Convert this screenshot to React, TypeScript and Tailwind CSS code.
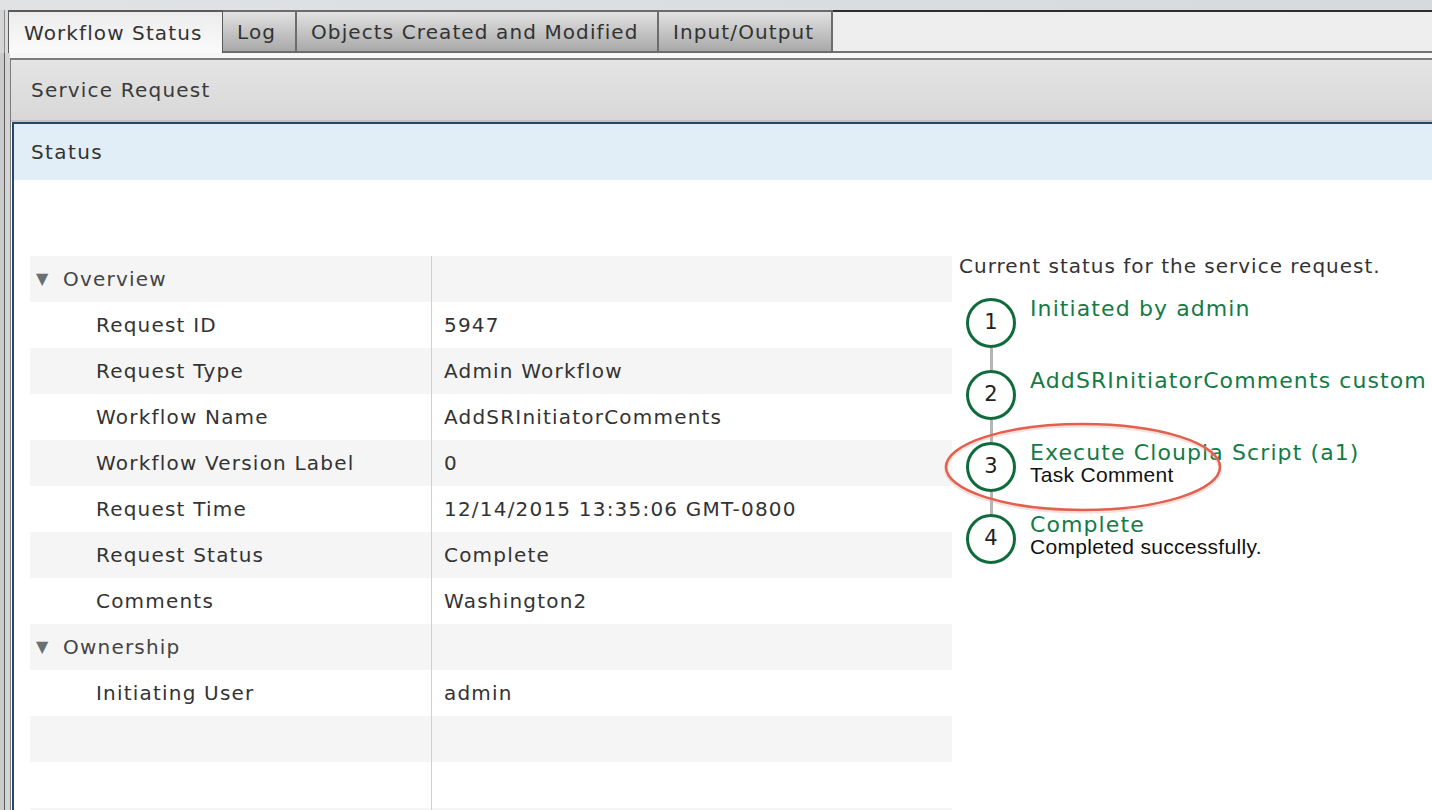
import React from "react";

type Row =
  | { kind: "group"; label: string }
  | { kind: "item"; label: string; value: string }
  | { kind: "blank" };

const rows: Row[] = [
  { kind: "group", label: "Overview" },
  { kind: "item", label: "Request ID", value: "5947" },
  { kind: "item", label: "Request Type", value: "Admin Workflow" },
  { kind: "item", label: "Workflow Name", value: "AddSRInitiatorComments" },
  { kind: "item", label: "Workflow Version Label", value: "0" },
  { kind: "item", label: "Request Time", value: "12/14/2015 13:35:06 GMT-0800" },
  { kind: "item", label: "Request Status", value: "Complete" },
  { kind: "item", label: "Comments", value: "Washington2" },
  { kind: "group", label: "Ownership" },
  { kind: "item", label: "Initiating User", value: "admin" },
  { kind: "blank" },
  { kind: "blank" },
  { kind: "blank" },
];

const steps = [
  { n: 1, title: "Initiated by admin" },
  { n: 2, title: "AddSRInitiatorComments custom" },
  { n: 3, title: "Execute Cloupia Script (a1)", note: "Task Comment" },
  { n: 4, title: "Complete", note: "Completed successfully." },
];

const tabs = [
  { label: "Log", w: "w-[74px]" },
  { label: "Objects Created and Modified", w: "w-[362px]" },
  { label: "Input/Output", w: "w-[174px]" },
];

function Tabs() {
  return (
    <div className="flex h-[43px]">
      <div className="flex w-[8px] shrink-0">
        <div className="w-[4px] bg-[#d4d6d8]" />
        <div className="w-[1px] bg-[#8a8a8a]" />
        <div className="w-[3px] bg-[#dcdcdc]" />
      </div>
      <div className="flex h-full w-[215px] shrink-0 items-center border-x border-t-2 border-[#5a5a5a] bg-linear-to-b from-[#ececec] to-[#fbfbfb] pl-[15px] text-[20px] tracking-[1.1px] text-[#333]">
        Workflow Status
      </div>
      {tabs.map((t) => (
        <div
          key={t.label}
          className={`flex h-full shrink-0 items-center border-r-2 border-t-2 border-b-2 border-[#6c6c6c] bg-linear-to-b from-[#e2e2e2] to-[#a9a9a9] pl-[14px] text-[20px] tracking-[1.1px] text-[#333] ${t.w}`}
        >
          {t.label}
        </div>
      ))}
      <div className="h-full flex-1 border-t-2 border-b-2 border-t-[#2e2e2e] border-b-[#727272] bg-[#eeeeee]" />
    </div>
  );
}

function Table() {
  return (
    <div className="w-[922px] shrink-0">
      {rows.map((r, i) => (
        <div
          key={i}
          className={`flex h-[46px] text-[20px] tracking-[1.2px] text-[#333] ${i % 2 === 0 ? "bg-[#f5f5f5]" : "bg-white"}`}
        >
          <div className="flex w-[401px] shrink-0 items-center">
            {r.kind === "group" && (
              <>
                <span className="ml-[6px] w-[27px] text-[16px] tracking-normal text-[#6a7071]">▼</span>
                <span className="text-[#444]">{r.label}</span>
              </>
            )}
            {r.kind === "item" && <span className="pl-[66px]">{r.label}</span>}
          </div>
          <div className="flex flex-1 items-center border-l border-[#cfcfcf] pl-[12px]">
            {r.kind === "item" ? r.value : ""}
          </div>
        </div>
      ))}
    </div>
  );
}

function Steps() {
  return (
    <div className="relative ml-[7px] mt-[22px]">
      {steps.map((s, i) => (
        <div key={s.n} className="flex h-[72px]">
          <div className="flex w-[50px] shrink-0 flex-col items-center">
            <div className="flex h-[50px] w-[50px] items-center justify-center rounded-full border-[3px] border-[#0f6b3c] text-[21px] text-[#222]">
              {s.n}
            </div>
            {i < steps.length - 1 && <div className="h-[22px] w-[3px] bg-[#b5b5b5]" />}
          </div>
          <div className="ml-[14px] flex flex-col whitespace-nowrap">
            <span className="text-[22px] leading-[22px] tracking-[1.1px] text-[#157a45]">{s.title}</span>
            {s.note && (
              <span className="font-['Liberation_Sans',sans-serif] text-[21px] leading-[21px] tracking-[0.3px] text-[#111]">
                {s.note}
              </span>
            )}
          </div>
        </div>
      ))}
      <svg
        className="pointer-events-none absolute left-[-25px] top-[122px]"
        width="284"
        height="96"
        viewBox="0 0 284 96"
      >
        <ellipse cx="142" cy="48.5" rx="137" ry="43" fill="none" stroke="#e8a59c" strokeWidth="4" opacity="0.35" />
        <ellipse cx="142" cy="47" rx="137" ry="43" fill="none" stroke="#e2604f" strokeWidth="2.5" />
      </svg>
    </div>
  );
}

export default function App() {
  return (
    <div className="flex h-[810px] w-[1432px] flex-col overflow-hidden bg-white font-['DejaVu_Sans',sans-serif]">
      <div className="h-[10px] shrink-0 bg-linear-to-r from-[#e0e2e4] to-[#d6dadd]" />
      <Tabs />
      <div className="flex min-h-0 flex-1">
        <div className="flex w-[10px] shrink-0">
          <div className="w-[4px] bg-[#cbcbcb]" />
          <div className="w-[1px] bg-[#5a5a5a]" />
          <div className="w-[5px] bg-[#d4d4d4]" />
        </div>
        <div className="flex min-w-0 flex-1 flex-col">
          <div className="h-[5px] shrink-0 bg-[#f7f7f7]" />
          <div className="flex min-h-0 flex-1 flex-col border-l border-t-2 border-[#7c7c7c]">
            <div className="flex h-[62px] shrink-0 items-center border-b-2 border-[#c2c2c2] bg-linear-to-b from-[#e4e4e4] to-[#d8d8d8] pl-[20px] text-[20px] tracking-[1.2px] text-[#3a3a3a]">
              Service Request
            </div>
            <div className="ml-[1px] flex min-h-0 flex-1 flex-col border-l-2 border-t-2 border-[#284766]">
              <div className="flex h-[56px] shrink-0 items-center bg-[#e1eef7] pl-[17px] text-[20px] tracking-[1.4px] text-[#333]">
                Status
              </div>
              <div className="flex min-h-0 flex-1 pl-[16px] pt-[76px]">
                <Table />
                <div className="ml-[7px] flex flex-col">
                  <div className="whitespace-nowrap text-[20px] leading-[20px] tracking-[1px] text-[#333]">
                    Current status for the service request.
                  </div>
                  <Steps />
                </div>
              </div>
            </div>
          </div>
        </div>
      </div>
    </div>
  );
}
